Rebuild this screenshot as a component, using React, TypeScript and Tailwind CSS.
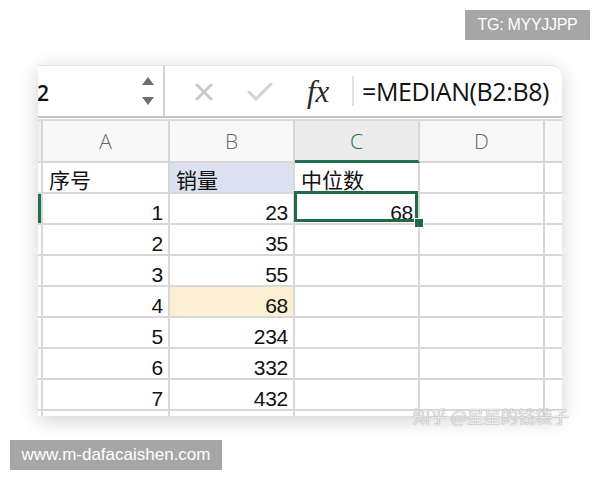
import React from 'react';

const cols = ['A', 'B', 'C', 'D'];

interface Row {
  a: string;
  b: string;
  c: string;
  bBg?: string;
  head?: boolean;
  active?: boolean;
}

const rows: Row[] = [
  { a: '序号', b: '销量', c: '中位数', bBg: 'bg-[#dce1f0]', head: true },
  { a: '1', b: '23', c: '68', active: true },
  { a: '2', b: '35', c: '' },
  { a: '3', b: '55', c: '' },
  { a: '4', b: '68', c: '', bBg: 'bg-[#fcf0d4]' },
  { a: '5', b: '234', c: '' },
  { a: '6', b: '332', c: '' },
  { a: '7', b: '432', c: '' },
];

const gridCols = 'grid grid-cols-[5px_127px_125px_125px_125px_1fr]';

const Spinner: React.FC = () => (
  <svg width="14" height="32" viewBox="0 0 14 32" className="mr-[8px] ml-auto">
    <path d="M7 2 L13 10 L1 10 Z" fill="#6f6f6f" />
    <path d="M1 22 L13 22 L7 30 Z" fill="#6f6f6f" />
  </svg>
);

const FormulaBar: React.FC = () => (
  <div className="flex items-center h-[52px] border-b-2 border-[#c4c4c4]">
    <div className="flex items-center w-[127px] h-full border-r-2 border-[#d2d2d2]">
      <span className="ml-[-1px] text-[21px] font-semibold text-[#111] font-['Open_Sans'] mt-[6px]">2</span>
      <Spinner />
    </div>
    <svg width="18" height="18" viewBox="0 0 18 18" className="ml-[30px] mt-[2px]">
      <path d="M2 2 L16 16 M16 2 L2 16" stroke="#c9c9c9" strokeWidth="3" strokeLinecap="round" />
    </svg>
    <svg width="26" height="20" viewBox="0 0 26 20" className="ml-[34px] mt-[2px]">
      <path d="M2 10 L9 17 L24 2" stroke="#d2d2d2" strokeWidth="3" fill="none" strokeLinecap="round" strokeLinejoin="round" />
    </svg>
    <span className="ml-[34px] w-[28px] text-[31px] italic text-[#2a2a2a] font-['Liberation_Serif'] leading-none">fx</span>
    <div className="ml-[17px] w-[2px] h-[30px] bg-[#e3e3e3]" />
    <span className="ml-[8px] text-[25px] text-[#111] font-['Open_Sans'] mt-[2px] tracking-[-0.4px]">=MEDIAN(B2:B8)</span>
  </div>
);

const HeaderRow: React.FC = () => (
  <div className={`${gridCols} h-[42px] bg-[#f8f8f8]`}>
    <div className="border-r-2 border-b-2 border-[#d6d6d6] bg-[#efefef]" />
    {cols.map((c) => (
      <div
        key={c}
        className={
          c === 'C'
            ? 'flex items-center justify-center border-r-2 border-[#d6d6d6] border-b-[3px] border-b-[#21704b] bg-[#ececec] text-[#1f6e47]'
            : 'flex items-center justify-center border-r-2 border-b-2 border-[#d6d6d6] text-[#6a6a6a]'
        }
      >
        <span className="text-[21px] font-light font-['Open_Sans'] mt-[2px]">{c}</span>
      </div>
    ))}
    <div className="border-b-2 border-[#d6d6d6]" />
  </div>
);

const Cell: React.FC<{ text: string; head?: boolean; bg?: string; children?: React.ReactNode }> = ({ text, head, bg, children }) => (
  <div
    className={`relative flex items-end border-r-2 border-b-2 border-[#d8d8d8] ${bg ?? 'bg-white'} ${
      head
        ? "justify-start pl-[6px] font-['Noto_Sans_CJK_SC'] text-[21px] leading-[26px]"
        : "justify-end pr-[5px] font-['Liberation_Sans'] text-[21px] leading-[21px] tracking-[-0.3px]"
    } text-[#111]`}
  >
    <span>{text}</span>
    {children}
  </div>
);

const DataRow: React.FC<{ row: Row }> = ({ row }) => (
  <div className={`${gridCols} h-[31px]`}>
    <div className={`border-r-2 border-b-2 border-[#d8d8d8] ${row.active ? 'bg-[#21704b]' : 'bg-white'}`} />
    <Cell text={row.a} head={row.head} />
    <Cell text={row.b} head={row.head} bg={row.bBg} />
    <Cell text={row.c} head={row.head}>
      {row.active && (
        <>
          <div className="absolute top-[-3px] left-[-1px] right-0 bottom-[1px] border-[3px] border-[#1f6b45] z-10" />
          <div className="absolute right-[-6px] bottom-[-5px] w-[10px] h-[10px] bg-[#1f6b45] border border-white z-20" />
        </>
      )}
    </Cell>
    <Cell text="" />
    <div className="border-b-2 border-[#d8d8d8]" />
  </div>
);

const App: React.FC = () => {
  return (
    <div className="relative w-[600px] h-[480px] bg-white overflow-hidden font-['Liberation_Sans']">
      {/* watermark top right */}
      <div className="absolute top-[10px] left-[465px] w-[125px] h-[30px] bg-[#a6a6a6] flex items-center justify-center text-white text-[16px] tracking-[-0.3px]">
        TG: MYYJJPP
      </div>

      <div className="flex flex-col">
        <div className="ml-[38px] mt-[65px] w-[524px] h-[351px] bg-white rounded-tr-[10px] rounded-br-[6px] overflow-hidden shadow-[0_4px_20px_rgba(0,0,0,0.18)] border-t border-[#e2e2e2]">
          <FormulaBar />
          <div className="h-[3px] border-b-2 border-[#dcdcdc]" />
          <HeaderRow />
          {rows.map((row, i) => (
            <DataRow key={i} row={row} />
          ))}
          <div className={`${gridCols} h-[10px]`}>
            <div className="border-r-2 border-[#d8d8d8]" />
            <div className="border-r-2 border-[#d8d8d8]" />
            <div className="border-r-2 border-[#d8d8d8]" />
            <div className="border-r-2 border-[#d8d8d8]" />
            <div className="border-r-2 border-[#d8d8d8]" />
            <div />
          </div>
        </div>

        <div className="ml-[10px] mt-[24px] w-[212px] h-[30px] bg-[#a6a6a6] flex items-center justify-center text-white text-[17px]">
          www.m-dafacaishen.com
        </div>
      </div>

      {/* watermark over card corner */}
      <div className="absolute left-[413px] top-[406px] text-[17px] leading-[20px] text-[#ebebeb] font-['Noto_Sans_CJK_SC'] [text-shadow:0_0_1px_#a8a8a8,0_0_1px_#a8a8a8]">
        知乎 @星星的钱袋子
      </div>
    </div>
  );
};

export default App;
